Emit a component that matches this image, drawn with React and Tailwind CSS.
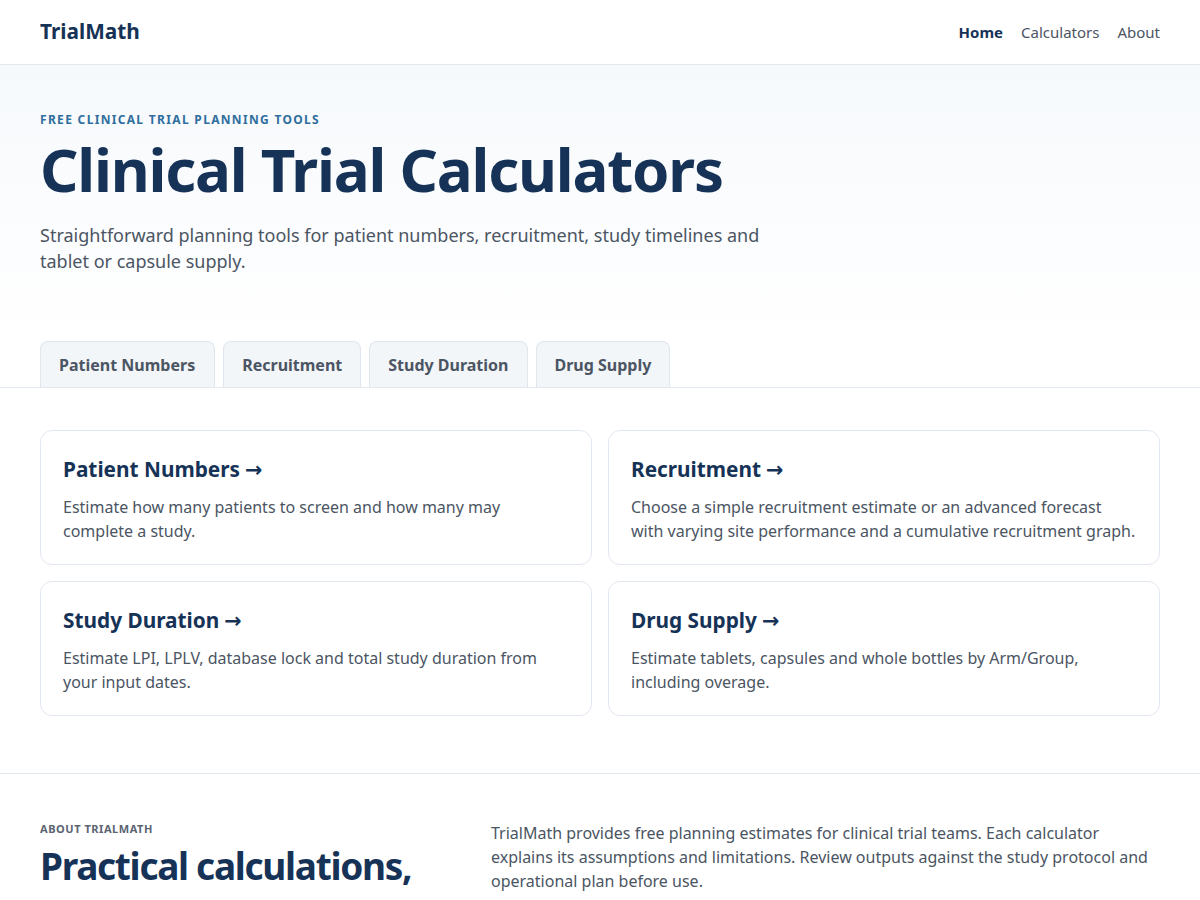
import React from 'react';

const tabs = ['Patient Numbers', 'Recruitment', 'Study Duration', 'Drug Supply'];

const cards = [
  {
    title: 'Patient Numbers',
    text: 'Estimate how many patients to screen and how many may complete a study.',
  },
  {
    title: 'Recruitment',
    text: 'Choose a simple recruitment estimate or an advanced forecast with varying site performance and a cumulative recruitment graph.',
  },
  {
    title: 'Study Duration',
    text: 'Estimate LPI, LPLV, database lock and total study duration from your input dates.',
  },
  {
    title: 'Drug Supply',
    text: 'Estimate tablets, capsules and whole bottles by Arm/Group, including overage.',
  },
];

export default function App() {
  return (
    <div className="min-h-screen bg-white text-[#4b5563] font-['Noto_Sans',sans-serif]">
      {/* header */}
      <header className="flex h-[65px] items-center justify-between border-b border-[#e2e8f0] px-10">
        <div className="text-[1.3rem] font-bold text-[#163357]">TrialMath</div>
        <nav className="flex items-center gap-[18px] text-[15px]">
          <a className="font-bold text-[#163357]">Home</a>
          <a className="text-[#4b5563]">Calculators</a>
          <a className="text-[#4b5563]">About</a>
        </nav>
      </header>

      {/* hero */}
      <section className="bg-gradient-to-b from-[#f6f9fc] to-white px-10 pt-[47px] pb-[67px]">
        <p className="text-xs font-bold uppercase tracking-[0.11em] leading-4 text-[#2f6e9e]">
          Free clinical trial planning tools
        </p>
        <h1 className="mt-[8px] text-[60px] font-bold leading-[66px] tracking-[-0.02em] text-[#163357]">
          Clinical Trial Calculators
        </h1>
        <p className="mt-[20px] max-w-[730px] text-lg leading-[26px] text-[#4b5563]">
          Straightforward planning tools for patient numbers, recruitment, study timelines and tablet or capsule supply.
        </p>
      </section>

      {/* tabs */}
      <div className="flex gap-2 border-b border-[#e2e8f0] px-10">
        {tabs.map((t, i) => (
          <button
            key={t}
            className={
              i === 0
                ? 'h-[46px] rounded-t-lg border border-b-0 border-[#dfe6ee] bg-[#f3f6f9] pl-[18px] pr-[19px] text-base font-bold text-[#4b5563]'
                : 'h-[46px] rounded-t-lg border border-b-0 border-[#dfe6ee] bg-[#f3f6f9] px-[18px] text-base font-bold text-[#4b5563]'
            }
          >
            {t}
          </button>
        ))}
      </div>

      {/* cards */}
      <section className="grid grid-cols-2 gap-4 px-10 pt-[42px] pb-[57px]">
        {cards.map((c) => (
          <div key={c.title} className="rounded-xl border border-[#e2e8f0] bg-white px-[22px] pt-[24px] pb-[21px]">
            <h3 className="text-[1.3rem] font-bold leading-7 text-[#163357]">
              {c.title}
              <span className="ml-[5px] font-['DejaVu_Sans',sans-serif] font-bold">→</span>
            </h3>
            <p className="mt-[11px] text-base leading-6 text-[#4b5563]">{c.text}</p>
          </div>
        ))}
      </section>

      {/* about */}
      <section className="grid grid-cols-[411px_1fr] gap-10 border-t border-[#e2e8f0] px-10 pt-[47px] pb-16">
        <div>
          <p className="text-[11px] font-bold uppercase tracking-[0.05em] leading-4 text-[#5b6472]">About TrialMath</p>
          <h2 className="mt-[3px] text-[37px] font-bold leading-[52px] tracking-[-0.035em] text-[#163357]">
            Practical calculations, clear assumptions
          </h2>
        </div>
        <p className="text-base leading-6 text-[#4b5563]">
          TrialMath provides free planning estimates for clinical trial teams. Each calculator explains its assumptions and limitations. Review outputs against the study protocol and operational plan before use.
        </p>
      </section>
    </div>
  );
}
